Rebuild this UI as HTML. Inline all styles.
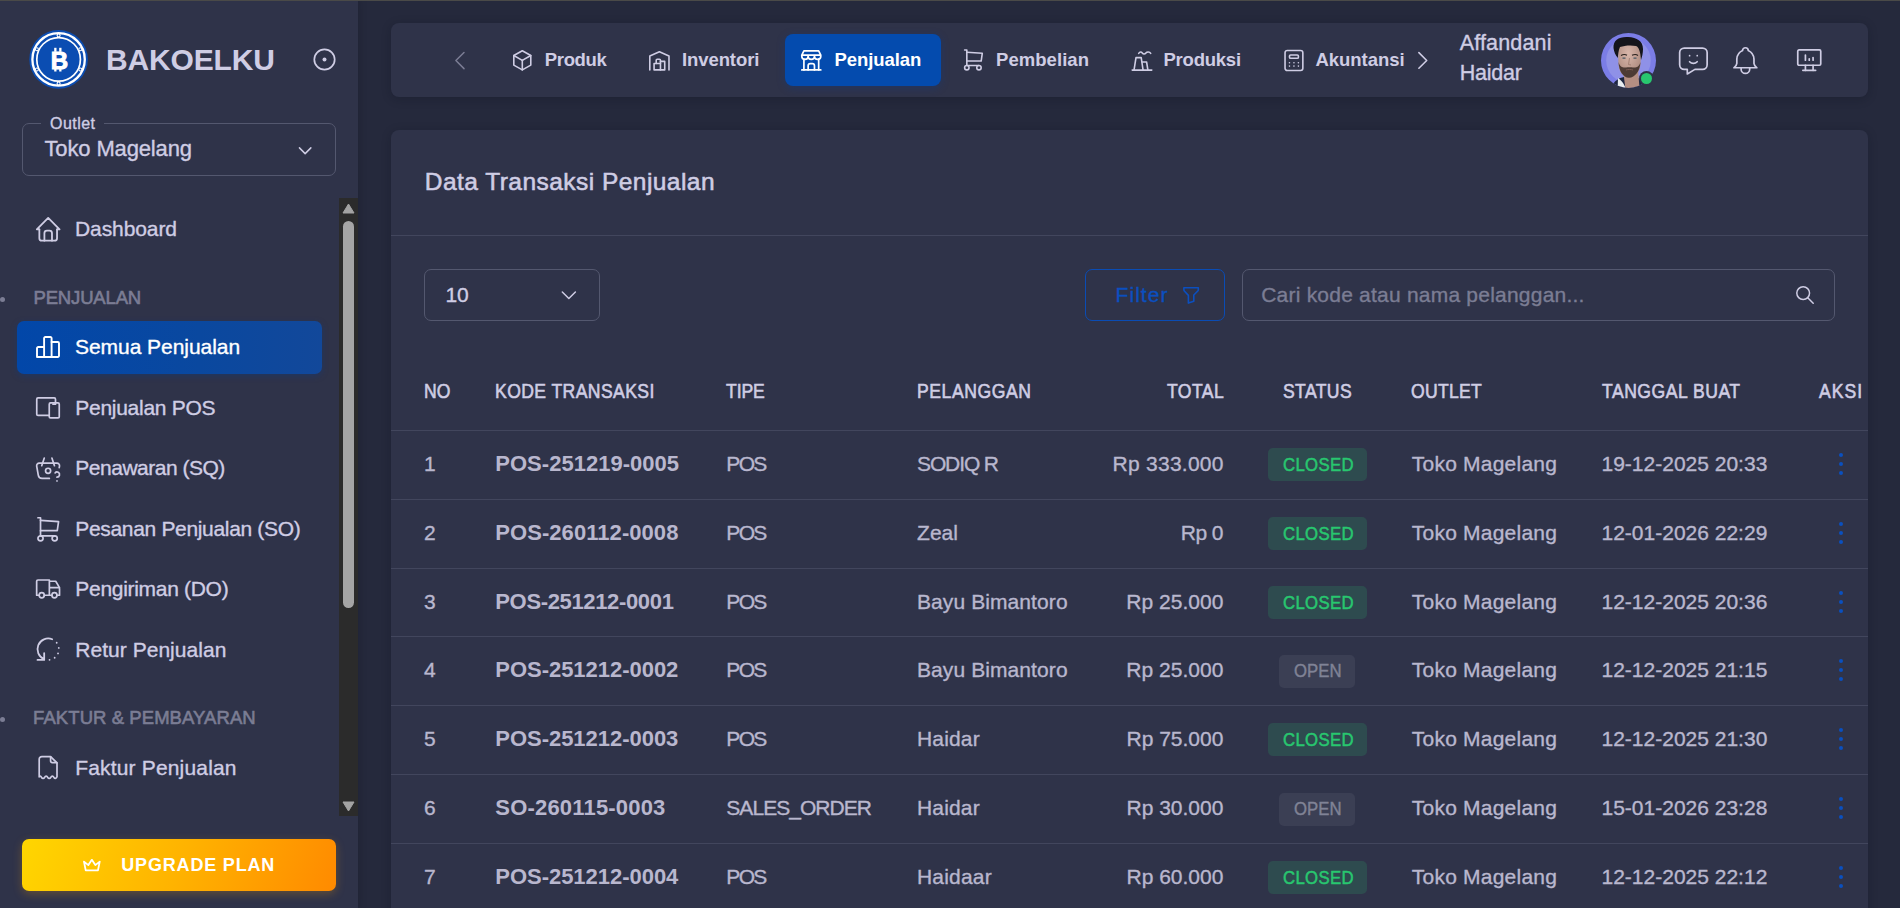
<!DOCTYPE html><html><head><meta charset="utf-8"><style>
html,body{margin:0;padding:0;}
body{width:1900px;height:908px;overflow:hidden;position:relative;background:#25293c;font-family:"Liberation Sans",sans-serif;}
.t{position:absolute;white-space:nowrap;font-family:"Liberation Sans",sans-serif;}
</style></head><body>
<div style="position:absolute;left:0px;top:0px;width:358px;height:908px;background:#2f3349;box-shadow:0 0 8px rgba(10,12,25,0.25);"></div>
<svg style="position:absolute;left:0;top:0" width="120" height="120" viewBox="0 0 120 120">
<circle cx="58.6" cy="59.4" r="29.3" fill="#0b4db2"/>
<circle cx="58.6" cy="59.4" r="26.2" fill="none" stroke="#fff" stroke-width="2.3"/>
<circle cx="58.6" cy="59.4" r="21.8" fill="none" stroke="#fff" stroke-width="1.7"/>
<g fill="#0b4db2" stroke="#fff" stroke-width="1.1">
<circle cx="58.6" cy="35.4" r="1.5"/><circle cx="58.6" cy="83.4" r="1.5"/>
<circle cx="80.3" cy="49.3" r="1.5"/><circle cx="80.3" cy="69.5" r="1.5"/>
<circle cx="36.9" cy="49.3" r="1.5"/><circle cx="36.9" cy="69.5" r="1.5"/>
</g>
<text x="59.4" y="68.6" text-anchor="middle" font-family="Liberation Sans" font-weight="bold" font-size="24" fill="#fff" stroke="#fff" stroke-width="1">B</text>
<rect x="54.2" y="47.8" width="2.3" height="4" fill="#fff"/><rect x="59.2" y="47.8" width="2.3" height="4" fill="#fff"/>
<rect x="54.2" y="67.5" width="2.3" height="4" fill="#fff"/><rect x="59.2" y="67.5" width="2.3" height="4" fill="#fff"/>
</svg>
<div class="t" style="left:106.0px;top:45.0px;font-size:30px;line-height:30px;color:#cfcde4;font-weight:bold;letter-spacing:-0.15px;">BAKOELKU</div>
<svg style="position:absolute;left:312px;top:47px" width="25" height="25" viewBox="0 0 25 25">
<circle cx="12.5" cy="12.5" r="10.2" fill="none" stroke="#cfcde4" stroke-width="1.7"/>
<circle cx="12.5" cy="12.5" r="2" fill="#cfcde4"/></svg>
<div style="position:absolute;left:22px;top:123px;width:312px;height:51px;border:1px solid #54586f;border-radius:7px;"></div>
<div style="position:absolute;left:41px;top:115px;width:63px;height:14px;background:#2f3349;"></div>
<div class="t" style="left:50.0px;top:115.7px;font-size:16px;line-height:16px;color:#cfcde4;letter-spacing:0.45px;-webkit-text-stroke:0.35px #cfcde4;">Outlet</div>
<div class="t" style="left:44.5px;top:138.3px;font-size:22px;line-height:22px;color:#cfcde4;letter-spacing:-0.14px;-webkit-text-stroke:0.35px #cfcde4;">Toko Magelang</div>
<svg style="position:absolute;left:298.70px;top:146.70px;overflow:visible;" width="12.30" height="7.50" viewBox="5.526 8.053 12.947 7.895" fill="none" stroke="#cfcde4" stroke-width="1.579" stroke-linecap="round" stroke-linejoin="round"><path d="M6 9l6 6l6 -6"/></svg>
<svg style="position:absolute;left:35.70px;top:216.50px;overflow:visible;" width="24.40" height="24.70" viewBox="2.347 2.229 19.305 19.543" fill="none" stroke="#cfcde4" stroke-width="1.424" stroke-linecap="round" stroke-linejoin="round"><path d="M5 12l-2 0l9 -9l9 9l-2 0"/><path d="M5 12v7a2 2 0 0 0 2 2h10a2 2 0 0 0 2 -2v-7"/><path d="M9 21v-6a2 2 0 0 1 2 -2h2a2 2 0 0 1 2 2v6"/></svg>
<div class="t" style="left:75.0px;top:218.2px;font-size:21px;line-height:21px;color:#cfcde4;letter-spacing:-0.09px;-webkit-text-stroke:0.35px #cfcde4;">Dashboard</div>
<div style="position:absolute;left:0px;top:296.5px;width:5px;height:5px;border-radius:50%;background:#7b7d94"></div>
<div class="t" style="left:33.5px;top:288.5px;font-size:18.5px;line-height:18.5px;color:#7b7d94;letter-spacing:-0.16px;-webkit-text-stroke:0.6px #7b7d94;">PENJUALAN</div>
<div style="position:absolute;left:17px;top:321px;width:305px;height:53px;border-radius:7px;background:linear-gradient(90deg,#0247a9 0%,#0a489f 60%,#12489a 100%);box-shadow:0 2px 6px rgba(4,60,150,0.35);"></div>
<svg style="position:absolute;left:0;top:0;overflow:visible" width="1900" height="908" viewBox="0 0 1900 908" fill="none" stroke="#ffffff" stroke-width="1.9" stroke-linecap="round" stroke-linejoin="round" ><path d="M37 357 V348.2 a1.2 1.2 0 0 1 1.2 -1.2 H44.1 V338.2 a1.2 1.2 0 0 1 1.2 -1.2 H50.4 a1.2 1.2 0 0 1 1.2 1.2 V342 H57.8 a1.2 1.2 0 0 1 1.2 1.2 V355.8 a1.2 1.2 0 0 1 -1.2 1.2 H38.2 a1.2 1.2 0 0 1 -1.2 -1.2 z"/><path d="M44.1 347 V357"/><path d="M51.6 342 V357"/></svg>
<div class="t" style="left:75.0px;top:336.4px;font-size:21px;line-height:21px;color:#ffffff;letter-spacing:-0.05px;-webkit-text-stroke:0.35px #ffffff;">Semua Penjualan</div>
<div class="t" style="left:75.3px;top:397.1px;font-size:21px;line-height:21px;color:#cfcde4;letter-spacing:-0.28px;-webkit-text-stroke:0.35px #cfcde4;">Penjualan POS</div>
<svg style="position:absolute;left:36.00px;top:396.90px;overflow:visible;" width="24.00" height="21.90" viewBox="2.405 3.245 19.189 17.510" fill="none" stroke="#cfcde4" stroke-width="1.359" stroke-linecap="round" stroke-linejoin="round"><path d="M13 9a1 1 0 0 1 1 -1h6a1 1 0 0 1 1 1v10a1 1 0 0 1 -1 1h-6a1 1 0 0 1 -1 -1v-10z"/><path d="M18 8v-3a1 1 0 0 0 -1 -1h-13a1 1 0 0 0 -1 1v12a1 1 0 0 0 1 1h9"/><path d="M16 9h2"/></svg>
<div class="t" style="left:75.3px;top:457.3px;font-size:21px;line-height:21px;color:#cfcde4;letter-spacing:-0.49px;-webkit-text-stroke:0.35px #cfcde4;">Penawaran (SQ)</div>
<svg style="position:absolute;left:36.00px;top:456.70px;overflow:visible;" width="24.20" height="25.00" viewBox="2.489 3.175 19.022 19.651" fill="none" stroke="#cfcde4" stroke-width="1.336" stroke-linecap="round" stroke-linejoin="round"><path d="M17 10l-2 -6"/><path d="M7 10l2 -6"/><path d="M13 20h-5.756a3 3 0 0 1 -2.965 -2.544l-1.255 -7.152a2 2 0 0 1 1.977 -2.304h13.999a2 2 0 0 1 1.977 2.304l-.215 1.227"/><path d="M10 14a2 2 0 1 0 4 0a2 2 0 0 0 -4 0"/><path d="M19 22v.01"/><path d="M19 19a2.003 2.003 0 0 0 .914 -3.782a1.98 1.98 0 0 0 -2.414 .483"/></svg>
<div class="t" style="left:75.3px;top:517.8px;font-size:21px;line-height:21px;color:#cfcde4;letter-spacing:-0.33px;-webkit-text-stroke:0.35px #cfcde4;">Pesanan Penjualan (SO)</div>
<svg style="position:absolute;left:36.70px;top:516.50px;overflow:visible;" width="22.50" height="24.70" viewBox="3.272 2.418 17.457 19.164" fill="none" stroke="#cfcde4" stroke-width="1.319" stroke-linecap="round" stroke-linejoin="round"><path d="M6 19m-2 0a2 2 0 1 0 4 0a2 2 0 1 0 -4 0"/><path d="M17 19m-2 0a2 2 0 1 0 4 0a2 2 0 1 0 -4 0"/><path d="M17 17h-11v-14h-2"/><path d="M6 5l14 1l-1 7h-13"/></svg>
<div class="t" style="left:75.3px;top:577.8px;font-size:21px;line-height:21px;color:#cfcde4;letter-spacing:-0.30px;-webkit-text-stroke:0.35px #cfcde4;">Pengiriman (DO)</div>
<svg style="position:absolute;left:36.00px;top:579.00px;overflow:visible;" width="24.20" height="19.80" viewBox="2.483 4.213 19.034 15.573" fill="none" stroke="#cfcde4" stroke-width="1.337" stroke-linecap="round" stroke-linejoin="round"><path d="M7 17m-2 0a2 2 0 1 0 4 0a2 2 0 1 0 -4 0"/><path d="M17 17m-2 0a2 2 0 1 0 4 0a2 2 0 1 0 -4 0"/><path d="M5 17h-2v-11a1 1 0 0 1 1 -1h9v12m-4 0h6m4 0h2v-6h-8m0 -5h5l3 5"/></svg>
<div class="t" style="left:75.3px;top:638.6px;font-size:21px;line-height:21px;color:#cfcde4;letter-spacing:0.03px;-webkit-text-stroke:0.35px #cfcde4;">Retur Penjualan</div>
<svg style="position:absolute;left:36.90px;top:638.00px;overflow:visible;" width="22.30" height="23.20" viewBox="3.622 3.590 16.697 17.371" fill="none" stroke="#cfcde4" stroke-width="1.348" stroke-linecap="round" stroke-linejoin="round"><path d="M15 4.55a8 8 0 0 0 -6 14.9m0 -4.45v5h-5"/><path d="M18.37 7.16l0 .01"/><path d="M13 19.94l0 .01"/><path d="M16.84 18.37l0 .01"/><path d="M19.37 15.1l0 .01"/><path d="M19.94 11l0 .01"/></svg>
<div style="position:absolute;left:0px;top:716.5px;width:5px;height:5px;border-radius:50%;background:#7b7d94"></div>
<div class="t" style="left:33.1px;top:708.6px;font-size:18.5px;line-height:18.5px;color:#7b7d94;letter-spacing:0.07px;-webkit-text-stroke:0.6px #7b7d94;">FAKTUR &amp; PEMBAYARAN</div>
<div class="t" style="left:75.2px;top:757.4px;font-size:21px;line-height:21px;color:#cfcde4;letter-spacing:0.17px;-webkit-text-stroke:0.35px #cfcde4;">Faktur Penjualan</div>
<svg style="position:absolute;left:0;top:0;overflow:visible" width="1900" height="908" viewBox="0 0 1900 908" fill="none" stroke="#cfcde4" stroke-width="1.7" stroke-linecap="round" stroke-linejoin="round" ><path d="M39.2 776.8 V759.2 a2.6 2.6 0 0 1 2.6 -2.6 H50.6 L57 762.9 V776.8 c-0.8 2 -2.3 2 -3.1 0.5 c-0.8 -1.5 -2.3 -1.5 -3.1 0 c-0.8 1.5 -2.3 1.5 -3.1 0 c-0.8 -1.5 -2.3 -1.5 -3.1 0 c-0.8 1.5 -2.3 1.5 -3.1 0 c-0.8 -1.5 -2 -1.3 -2.3 -0.5"/><path d="M50.6 756.8 V761.1 a1.6 1.6 0 0 0 1.6 1.6 H56.8"/></svg>
<div style="position:absolute;left:339px;top:198px;width:19px;height:618px;background:#2b2b2b;"></div>
<svg style="position:absolute;left:342px;top:203px" width="13" height="11" viewBox="0 0 13 11"><path d="M6.5 1L12 10H1z" fill="#a3a3a3" stroke="#a3a3a3" stroke-linejoin="round" stroke-width="1"/></svg>
<svg style="position:absolute;left:342px;top:801px" width="13" height="11" viewBox="0 0 13 11"><path d="M6.5 10L12 1H1z" fill="#a3a3a3" stroke="#a3a3a3" stroke-linejoin="round" stroke-width="1"/></svg>
<div style="position:absolute;left:343px;top:220.7px;width:11px;height:387px;background:#a5a5a5;border-radius:6px;"></div>
<div style="position:absolute;left:22px;top:839px;width:314px;height:52px;border-radius:7px;background:linear-gradient(110deg,#ffd600 0%,#ffb300 50%,#ff8a00 100%);box-shadow:0 3px 10px rgba(255,160,0,0.25);"></div>
<svg style="position:absolute;left:83.10px;top:858.90px;overflow:visible;" width="17.70" height="12.20" viewBox="1.886 5.029 20.229 13.943" fill="none" stroke="#ffffff" stroke-width="2.057" stroke-linecap="round" stroke-linejoin="round"><path d="M12 6l4 6l5 -4l-2 10h-14l-2 -10l5 4z"/></svg>
<div class="t" style="left:121.3px;top:856.0px;font-size:18px;line-height:18px;color:#ffffff;font-weight:bold;letter-spacing:0.82px;">UPGRADE PLAN</div>
<div style="position:absolute;left:391px;top:23px;width:1477px;height:74px;background:#2f3349;border-radius:8px;box-shadow:0 2px 10px rgba(12,14,28,0.25);"></div>
<svg style="position:absolute;left:454.50px;top:51.90px;overflow:visible;" width="9.90" height="17.10" viewBox="8.333 5.667 7.333 12.667" fill="none" stroke="#7b7d94" stroke-width="1.111" stroke-linecap="round" stroke-linejoin="round"><path d="M15 6l-6 6l6 6"/></svg>
<svg style="position:absolute;left:512.60px;top:50.10px;overflow:visible;" width="18.60" height="20.70" viewBox="3.241 2.252 17.517 19.495" fill="none" stroke="#cfcde4" stroke-width="1.507" stroke-linecap="round" stroke-linejoin="round"><path d="M12 3l8 4.5l0 9l-8 4.5l-8 -4.5l0 -9l8 -4.5"/><path d="M12 12l8 -4.5"/><path d="M12 12l0 9"/><path d="M12 12l-8 -4.5"/></svg>
<div class="t" style="left:544.8px;top:50.5px;font-size:18.5px;line-height:18.5px;color:#cfcde4;font-weight:bold;letter-spacing:-0.34px;">Produk</div>
<svg style="position:absolute;left:649.10px;top:51.10px;overflow:visible;" width="20.80" height="19.70" viewBox="2.241 3.257 19.518 18.486" fill="none" stroke="#cfcde4" stroke-width="1.501" stroke-linecap="round" stroke-linejoin="round"><path d="M3 21v-13l9 -4l9 4v13"/><path d="M13 13h4v8h-10v-6h6"/><path d="M13 21v-9a1 1 0 0 0 -1 -1h-2a1 1 0 0 0 -1 1v3"/></svg>
<div class="t" style="left:682.0px;top:50.8px;font-size:18.5px;line-height:18.5px;color:#cfcde4;font-weight:bold;letter-spacing:-0.09px;">Inventori</div>
<div style="position:absolute;left:785px;top:34px;width:156px;height:52px;background:#044bae;border-radius:8px;box-shadow:0 2px 8px rgba(4,60,160,0.3);"></div>
<svg style="position:absolute;left:801.30px;top:50.00px;overflow:visible;" width="20.60" height="20.80" viewBox="2.242 2.147 19.516 19.705" fill="none" stroke="#ffffff" stroke-width="1.611" stroke-linecap="round" stroke-linejoin="round"><path d="M3 21l18 0"/><path d="M3 7v1a3 3 0 0 0 6 0v-1m0 1a3 3 0 0 0 6 0v-1m0 1a3 3 0 0 0 6 0v-1h-18l2 -4h14l2 4"/><path d="M5 21l0 -10.15"/><path d="M19 21l0 -10.15"/><path d="M9 21v-4a2 2 0 0 1 2 -2h2a2 2 0 0 1 2 2v4"/></svg>
<div class="t" style="left:834.6px;top:51.0px;font-size:18.5px;line-height:18.5px;color:#ffffff;font-weight:bold;letter-spacing:-0.08px;">Penjualan</div>
<svg style="position:absolute;left:964.10px;top:49.30px;overflow:visible;" width="18.90" height="21.90" viewBox="3.444 2.086 17.112 19.828" fill="none" stroke="#cfcde4" stroke-width="1.449" stroke-linecap="round" stroke-linejoin="round"><path d="M6 19m-2 0a2 2 0 1 0 4 0a2 2 0 1 0 -4 0"/><path d="M17 19m-2 0a2 2 0 1 0 4 0a2 2 0 1 0 -4 0"/><path d="M17 17h-11v-14h-2"/><path d="M6 5l14 1l-1 7h-13"/></svg>
<div class="t" style="left:996.0px;top:50.8px;font-size:18.5px;line-height:18.5px;color:#cfcde4;font-weight:bold;letter-spacing:0.06px;">Pembelian</div>
<svg style="position:absolute;left:0;top:0;overflow:visible" width="1900" height="908" viewBox="0 0 1900 908" fill="none" stroke="#cfcde4" stroke-width="1.6" stroke-linecap="round" stroke-linejoin="round" ><path d="M1132.2 70.1 H1151.8"/><path d="M1134 70.1 L1136 57.6 H1141.2 L1143.1 70.1"/><path d="M1142.3 62 H1146.6 L1147.9 70.1"/><path d="M1138.7 53.4 C1139.9 51.7 1141.3 51.7 1142.3 53 C1143.3 54.3 1144.9 54.3 1145.9 53 C1147 51.7 1149.6 51.7 1150.7 53.4"/></svg>
<div class="t" style="left:1163.5px;top:50.8px;font-size:18.5px;line-height:18.5px;color:#cfcde4;font-weight:bold;letter-spacing:-0.23px;">Produksi</div>
<svg style="position:absolute;left:1283.50px;top:50.10px;overflow:visible;" width="19.90" height="21.10" viewBox="3.065 2.526 17.871 18.949" fill="none" stroke="#cfcde4" stroke-width="1.437" stroke-linecap="round" stroke-linejoin="round"><path d="M4 3m0 2a2 2 0 0 1 2 -2h12a2 2 0 0 1 2 2v14a2 2 0 0 1 -2 2h-12a2 2 0 0 1 -2 -2z"/><path d="M8 7m0 1a1 1 0 0 1 1 -1h6a1 1 0 0 1 1 1v1a1 1 0 0 1 -1 1h-6a1 1 0 0 1 -1 -1z"/><path d="M8 14l0 .01"/><path d="M12 14l0 .01"/><path d="M16 14l0 .01"/><path d="M8 17l0 .01"/><path d="M12 17l0 .01"/><path d="M16 17l0 .01"/></svg>
<div class="t" style="left:1315.5px;top:50.8px;font-size:18.5px;line-height:18.5px;color:#cfcde4;font-weight:bold;letter-spacing:-0.05px;">Akuntansi</div>
<svg style="position:absolute;left:1417.70px;top:52.30px;overflow:visible;" width="9.60" height="16.90" viewBox="8.319 5.521 7.361 12.958" fill="none" stroke="#cfcde4" stroke-width="1.227" stroke-linecap="round" stroke-linejoin="round"><path d="M9 6l6 6l-6 6"/></svg>
<div class="t" style="left:1459.7px;top:32.9px;font-size:21.5px;line-height:21.5px;color:#cfcde4;letter-spacing:0.17px;-webkit-text-stroke:0.35px #cfcde4;">Affandani</div>
<div class="t" style="left:1459.7px;top:63.4px;font-size:21.5px;line-height:21.5px;color:#cfcde4;letter-spacing:-0.21px;-webkit-text-stroke:0.35px #cfcde4;">Haidar</div>
<svg style="position:absolute;left:0;top:0" width="1700" height="100" viewBox="0 0 1700 100">
<defs><clipPath id="av"><circle cx="1628.5" cy="60.4" r="27.5"/></clipPath>
<radialGradient id="skin" cx="0.45" cy="0.35" r="0.7"><stop offset="0" stop-color="#d8b6aa"/><stop offset="1" stop-color="#a9867a"/></radialGradient></defs>
<circle cx="1628.5" cy="60.4" r="27.5" fill="#7b7de6"/>
<g clip-path="url(#av)">
<circle cx="1628.5" cy="60.4" r="22.3" fill="#8f91e7"/>
<path d="M1610 92 C1612 82 1618 78 1624 77 L1634 77 C1640 78 1646 82 1648 92z" fill="#1c2540"/>
<path d="M1617.5 93 L1618 78 C1621 80 1625 84 1627 93z" fill="#e8ecf0"/>
<path d="M1623 70 L1638 70 L1640 93 L1626 93z" fill="#b48e82"/>
<path d="M1618 52 C1618 43 1623 40 1629.5 40 C1636 40 1641 43 1641 52 L1640.5 64 C1640 72 1635 77 1629 77.5 C1623 77 1619 72 1618.5 64z" fill="url(#skin)"/>
<path d="M1618.5 62 C1619 71 1623 77.5 1629 77.8 C1635 77.5 1640 71 1640.5 62 C1639 67 1636 68 1633 67.5 C1631 67 1628 67 1626 67.5 C1623 68 1620 67 1618.5 62z" fill="#3b2c27" opacity="0.85"/>
<path d="M1621 55.5 C1623 54.3 1625.5 54.3 1627 55.3 M1632 55.3 C1634 54.3 1636.5 54.3 1638 55.5" stroke="#2a211e" stroke-width="1.1" fill="none"/>
<path d="M1622.5 58.2 h3 M1633.5 58.2 h3" stroke="#4a5a66" stroke-width="1.2"/>
<path d="M1629.5 58 L1628.5 64.5 L1631 65" stroke="#9a776b" stroke-width="0.8" fill="none"/>
<path d="M1626 70 C1628 69.3 1631 69.3 1633 70" stroke="#7a5a52" stroke-width="1" fill="none"/>
<path d="M1613.5 48 C1613 40 1619 36.5 1628 37 C1637 37.5 1643 41 1643 49 C1643 53 1642 57 1641 60 C1640.5 52 1639 47 1636 46 C1631 45 1624 45.5 1620 47 C1618.5 50 1618 55 1617.8 58 C1615.5 55 1614 52 1613.5 48z" fill="#15151b"/>
</g></svg>
<div style="position:absolute;left:1638.9px;top:70.6px;width:15px;height:15px;border-radius:50%;background:#2f3349"></div>
<div style="position:absolute;left:1640.9px;top:72.6px;width:11px;height:11px;border-radius:50%;background:#28c76f"></div>
<svg style="position:absolute;left:1679.10px;top:46.80px;overflow:visible;" width="28.80" height="28.00" viewBox="2.565 3.328 18.869 18.345" fill="none" stroke="#cfcde4" stroke-width="1.114" stroke-linecap="round" stroke-linejoin="round"><path d="M18 4a3 3 0 0 1 3 3v8a3 3 0 0 1 -3 3h-5l-5 3v-3h-2a3 3 0 0 1 -3 -3v-8a3 3 0 0 1 3 -3h12z"/><path d="M9.5 9h.01"/><path d="M14.5 9h.01"/><path d="M9.5 13a3.5 3.5 0 0 0 5 0"/></svg>
<svg style="position:absolute;left:1733.00px;top:46.80px;overflow:visible;" width="24.80" height="27.20" viewBox="3.330 2.491 17.340 19.018" fill="none" stroke="#cfcde4" stroke-width="1.189" stroke-linecap="round" stroke-linejoin="round"><path d="M10 5a2 2 0 1 1 4 0a7 7 0 0 1 4 6v3a4 4 0 0 0 2 3h-16a4 4 0 0 0 2 -3v-3a7 7 0 0 1 4 -6"/><path d="M9 17v1a3 3 0 0 0 6 0v-1"/></svg>
<svg style="position:absolute;left:1796.50px;top:48.80px;overflow:visible;" width="24.50" height="22.30" viewBox="2.408 3.269 19.184 17.462" fill="none" stroke="#cfcde4" stroke-width="1.331" stroke-linecap="round" stroke-linejoin="round"><path d="M3 4m0 1a1 1 0 0 1 1 -1h16a1 1 0 0 1 1 1v10a1 1 0 0 1 -1 1h-16a1 1 0 0 1 -1 -1z"/><path d="M7 20h10"/><path d="M9 16v4"/><path d="M15 16v4"/><path d="M9 12v-4"/><path d="M12 12v-1"/><path d="M15 12v-2"/></svg>
<div style="position:absolute;left:391px;top:130px;width:1477px;height:800px;background:#2f3349;border-radius:8px;box-shadow:0 2px 10px rgba(12,14,28,0.25);"></div>
<div class="t" style="left:424.8px;top:170.4px;font-size:24.5px;line-height:24.5px;color:#cfcde4;letter-spacing:0.46px;-webkit-text-stroke:0.55px #cfcde4;">Data Transaksi Penjualan</div>
<div style="position:absolute;left:391px;top:235px;width:1477px;height:1px;background:#42465d;"></div>
<div style="position:absolute;left:424px;top:269px;width:176px;height:52px;box-sizing:border-box;border:1px solid #54586f;border-radius:7px;"></div>
<div class="t" style="left:445.4px;top:284.2px;font-size:21px;line-height:21px;color:#cfcde4;-webkit-text-stroke:0.35px #cfcde4;">10</div>
<svg style="position:absolute;left:562.00px;top:290.70px;overflow:visible;" width="13.70" height="8.50" viewBox="5.725 8.107 12.550 7.786" fill="none" stroke="#cfcde4" stroke-width="1.374" stroke-linecap="round" stroke-linejoin="round"><path d="M6 9l6 6l6 -6"/></svg>
<div style="position:absolute;left:1085px;top:269px;width:140px;height:52px;box-sizing:border-box;border:1.5px solid #0a4cb4;border-radius:7px;"></div>
<div class="t" style="left:1115.6px;top:284.1px;font-size:21px;line-height:21px;color:#0b4fbf;letter-spacing:1.03px;-webkit-text-stroke:0.35px #0b4fbf;">Filter</div>
<svg style="position:absolute;left:1182.80px;top:287.00px;overflow:visible;" width="16.20" height="16.80" viewBox="3.033 3.201 17.934 18.598" fill="none" stroke="#0b4fbf" stroke-width="1.771" stroke-linecap="round" stroke-linejoin="round"><path d="M4 4h16v2.172a2 2 0 0 1 -.586 1.414l-4.414 4.414v7l-6 2v-8.5l-4.48 -4.928a2 2 0 0 1 -.52 -1.345v-2.227z"/></svg>
<div style="position:absolute;left:1242px;top:269px;width:593px;height:52px;box-sizing:border-box;border:1px solid #54586f;border-radius:7px;"></div>
<div class="t" style="left:1261.2px;top:284.3px;font-size:21px;line-height:21px;color:#7b7d94;letter-spacing:0.22px;-webkit-text-stroke:0.35px #7b7d94;">Cari kode atau nama pelanggan...</div>
<svg style="position:absolute;left:1796.00px;top:286.00px;overflow:visible;" width="18.00" height="17.90" viewBox="2.152 2.207 19.696 19.587" fill="none" stroke="#cfcde4" stroke-width="1.641" stroke-linecap="round" stroke-linejoin="round"><path d="M10 10m-7 0a7 7 0 1 0 14 0a7 7 0 1 0 -14 0"/><path d="M21 21l-6 -6"/></svg>
<div class="t" style="left:424.0px;top:382.1px;font-size:19.5px;line-height:19.5px;color:#cfcde4;letter-spacing:0.19px;-webkit-text-stroke:0.6px #cfcde4;transform:scaleX(0.9);transform-origin:0 0;">NO</div>
<div class="t" style="left:495.0px;top:382.1px;font-size:19.5px;line-height:19.5px;color:#cfcde4;letter-spacing:0.47px;-webkit-text-stroke:0.6px #cfcde4;transform:scaleX(0.9);transform-origin:0 0;">KODE TRANSAKSI</div>
<div class="t" style="left:726.0px;top:382.1px;font-size:19.5px;line-height:19.5px;color:#cfcde4;letter-spacing:-0.07px;-webkit-text-stroke:0.6px #cfcde4;transform:scaleX(0.9);transform-origin:0 0;">TIPE</div>
<div class="t" style="left:917.0px;top:382.1px;font-size:19.5px;line-height:19.5px;color:#cfcde4;letter-spacing:0.64px;-webkit-text-stroke:0.6px #cfcde4;transform:scaleX(0.9);transform-origin:0 0;">PELANGGAN</div>
<div class="t" style="left:1166.5px;top:382.1px;font-size:19.5px;line-height:19.5px;color:#cfcde4;letter-spacing:0.50px;-webkit-text-stroke:0.6px #cfcde4;transform:scaleX(0.9);transform-origin:0 0;">TOTAL</div>
<div class="t" style="left:1283.0px;top:382.1px;font-size:19.5px;line-height:19.5px;color:#cfcde4;letter-spacing:0.45px;-webkit-text-stroke:0.6px #cfcde4;transform:scaleX(0.9);transform-origin:0 0;">STATUS</div>
<div class="t" style="left:1411.2px;top:382.1px;font-size:19.5px;line-height:19.5px;color:#cfcde4;letter-spacing:0.31px;-webkit-text-stroke:0.6px #cfcde4;transform:scaleX(0.9);transform-origin:0 0;">OUTLET</div>
<div class="t" style="left:1601.6px;top:382.1px;font-size:19.5px;line-height:19.5px;color:#cfcde4;letter-spacing:0.58px;-webkit-text-stroke:0.6px #cfcde4;transform:scaleX(0.9);transform-origin:0 0;">TANGGAL BUAT</div>
<div class="t" style="left:1819.2px;top:382.1px;font-size:19.5px;line-height:19.5px;color:#cfcde4;letter-spacing:1.16px;-webkit-text-stroke:0.6px #cfcde4;transform:scaleX(0.9);transform-origin:0 0;">AKSI</div>
<div style="position:absolute;left:391px;top:430px;width:1477px;height:1px;background:#42465d;"></div>
<div class="t" style="left:424.0px;top:453.1px;font-size:21px;line-height:21px;color:#b9b7ce;-webkit-text-stroke:0.35px #b9b7ce;">1</div>
<div class="t" style="left:495.3px;top:452.9px;font-size:22px;line-height:22px;color:#b9b7ce;font-weight:bold;letter-spacing:0.02px;">POS-251219-0005</div>
<div class="t" style="left:726.3px;top:453.1px;font-size:21px;line-height:21px;color:#b9b7ce;letter-spacing:-1.66px;-webkit-text-stroke:0.35px #b9b7ce;">POS</div>
<div class="t" style="left:917.0px;top:453.1px;font-size:21px;line-height:21px;color:#b9b7ce;letter-spacing:-1.11px;-webkit-text-stroke:0.35px #b9b7ce;">SODIQ R</div>
<div class="t" style="left:1112.6px;top:453.1px;font-size:21px;line-height:21px;color:#b9b7ce;letter-spacing:0.25px;-webkit-text-stroke:0.35px #b9b7ce;">Rp 333.000</div>
<div style="position:absolute;left:1268px;top:448px;width:99px;height:33px;background:#2e4b4f;border-radius:5px;"></div>
<div class="t" style="left:1282.5px;top:455.7px;font-size:18px;line-height:18px;color:#28c76f;letter-spacing:0.36px;-webkit-text-stroke:0.5px #28c76f;transform:scaleX(0.93);transform-origin:0 0;">CLOSED</div>
<div class="t" style="left:1411.8px;top:453.1px;font-size:21px;line-height:21px;color:#b9b7ce;letter-spacing:0.22px;-webkit-text-stroke:0.35px #b9b7ce;">Toko Magelang</div>
<div class="t" style="left:1601.5px;top:453.1px;font-size:21px;line-height:21px;color:#b9b7ce;-webkit-text-stroke:0.35px #b9b7ce;">19-12-2025 20:33</div>
<div style="position:absolute;left:1839px;top:453.4px;width:4px;height:4px;border-radius:50%;background:#0a50bf"></div>
<div style="position:absolute;left:1839px;top:462.2px;width:4px;height:4px;border-radius:50%;background:#0a50bf"></div>
<div style="position:absolute;left:1839px;top:470.9px;width:4px;height:4px;border-radius:50%;background:#0a50bf"></div>
<div class="t" style="left:424.0px;top:522.1px;font-size:21px;line-height:21px;color:#b9b7ce;-webkit-text-stroke:0.35px #b9b7ce;">2</div>
<div class="t" style="left:495.3px;top:521.9px;font-size:22px;line-height:22px;color:#b9b7ce;font-weight:bold;letter-spacing:0.06px;">POS-260112-0008</div>
<div class="t" style="left:726.3px;top:522.1px;font-size:21px;line-height:21px;color:#b9b7ce;letter-spacing:-1.66px;-webkit-text-stroke:0.35px #b9b7ce;">POS</div>
<div class="t" style="left:917.0px;top:522.1px;font-size:21px;line-height:21px;color:#b9b7ce;letter-spacing:0.05px;-webkit-text-stroke:0.35px #b9b7ce;">Zeal</div>
<div class="t" style="left:1180.8px;top:522.1px;font-size:21px;line-height:21px;color:#b9b7ce;letter-spacing:-0.58px;-webkit-text-stroke:0.35px #b9b7ce;">Rp 0</div>
<div style="position:absolute;left:1268px;top:517px;width:99px;height:33px;background:#2e4b4f;border-radius:5px;"></div>
<div class="t" style="left:1282.5px;top:524.7px;font-size:18px;line-height:18px;color:#28c76f;letter-spacing:0.36px;-webkit-text-stroke:0.5px #28c76f;transform:scaleX(0.93);transform-origin:0 0;">CLOSED</div>
<div class="t" style="left:1411.8px;top:522.1px;font-size:21px;line-height:21px;color:#b9b7ce;letter-spacing:0.22px;-webkit-text-stroke:0.35px #b9b7ce;">Toko Magelang</div>
<div class="t" style="left:1601.5px;top:522.1px;font-size:21px;line-height:21px;color:#b9b7ce;-webkit-text-stroke:0.35px #b9b7ce;">12-01-2026 22:29</div>
<div style="position:absolute;left:1839px;top:522.4px;width:4px;height:4px;border-radius:50%;background:#0a50bf"></div>
<div style="position:absolute;left:1839px;top:531.2px;width:4px;height:4px;border-radius:50%;background:#0a50bf"></div>
<div style="position:absolute;left:1839px;top:539.9px;width:4px;height:4px;border-radius:50%;background:#0a50bf"></div>
<div style="position:absolute;left:391px;top:499px;width:1477px;height:1px;background:#42465d;"></div>
<div class="t" style="left:424.0px;top:591.1px;font-size:21px;line-height:21px;color:#b9b7ce;-webkit-text-stroke:0.35px #b9b7ce;">3</div>
<div class="t" style="left:495.3px;top:590.9px;font-size:22px;line-height:22px;color:#b9b7ce;font-weight:bold;letter-spacing:-0.35px;">POS-251212-0001</div>
<div class="t" style="left:726.3px;top:591.1px;font-size:21px;line-height:21px;color:#b9b7ce;letter-spacing:-1.66px;-webkit-text-stroke:0.35px #b9b7ce;">POS</div>
<div class="t" style="left:917.0px;top:591.1px;font-size:21px;line-height:21px;color:#b9b7ce;letter-spacing:0.09px;-webkit-text-stroke:0.35px #b9b7ce;">Bayu Bimantoro</div>
<div class="t" style="left:1126.2px;top:591.1px;font-size:21px;line-height:21px;color:#b9b7ce;letter-spacing:0.04px;-webkit-text-stroke:0.35px #b9b7ce;">Rp 25.000</div>
<div style="position:absolute;left:1268px;top:586px;width:99px;height:33px;background:#2e4b4f;border-radius:5px;"></div>
<div class="t" style="left:1282.5px;top:593.7px;font-size:18px;line-height:18px;color:#28c76f;letter-spacing:0.36px;-webkit-text-stroke:0.5px #28c76f;transform:scaleX(0.93);transform-origin:0 0;">CLOSED</div>
<div class="t" style="left:1411.8px;top:591.1px;font-size:21px;line-height:21px;color:#b9b7ce;letter-spacing:0.22px;-webkit-text-stroke:0.35px #b9b7ce;">Toko Magelang</div>
<div class="t" style="left:1601.5px;top:591.1px;font-size:21px;line-height:21px;color:#b9b7ce;-webkit-text-stroke:0.35px #b9b7ce;">12-12-2025 20:36</div>
<div style="position:absolute;left:1839px;top:591.4px;width:4px;height:4px;border-radius:50%;background:#0a50bf"></div>
<div style="position:absolute;left:1839px;top:600.2px;width:4px;height:4px;border-radius:50%;background:#0a50bf"></div>
<div style="position:absolute;left:1839px;top:608.9px;width:4px;height:4px;border-radius:50%;background:#0a50bf"></div>
<div style="position:absolute;left:391px;top:568px;width:1477px;height:1px;background:#42465d;"></div>
<div class="t" style="left:424.0px;top:659.1px;font-size:21px;line-height:21px;color:#b9b7ce;-webkit-text-stroke:0.35px #b9b7ce;">4</div>
<div class="t" style="left:495.3px;top:658.9px;font-size:22px;line-height:22px;color:#b9b7ce;font-weight:bold;letter-spacing:-0.03px;">POS-251212-0002</div>
<div class="t" style="left:726.3px;top:659.1px;font-size:21px;line-height:21px;color:#b9b7ce;letter-spacing:-1.66px;-webkit-text-stroke:0.35px #b9b7ce;">POS</div>
<div class="t" style="left:917.0px;top:659.1px;font-size:21px;line-height:21px;color:#b9b7ce;letter-spacing:0.09px;-webkit-text-stroke:0.35px #b9b7ce;">Bayu Bimantoro</div>
<div class="t" style="left:1126.2px;top:659.1px;font-size:21px;line-height:21px;color:#b9b7ce;letter-spacing:0.04px;-webkit-text-stroke:0.35px #b9b7ce;">Rp 25.000</div>
<div style="position:absolute;left:1279.4px;top:654.5px;width:76px;height:33px;background:#3b3f54;border-radius:5px;"></div>
<div class="t" style="left:1293.8px;top:661.7px;font-size:18px;line-height:18px;color:#808396;letter-spacing:0.03px;-webkit-text-stroke:0.4px #808396;transform:scaleX(0.93);transform-origin:0 0;">OPEN</div>
<div class="t" style="left:1411.8px;top:659.1px;font-size:21px;line-height:21px;color:#b9b7ce;letter-spacing:0.22px;-webkit-text-stroke:0.35px #b9b7ce;">Toko Magelang</div>
<div class="t" style="left:1601.5px;top:659.1px;font-size:21px;line-height:21px;color:#b9b7ce;-webkit-text-stroke:0.35px #b9b7ce;">12-12-2025 21:15</div>
<div style="position:absolute;left:1839px;top:659.4px;width:4px;height:4px;border-radius:50%;background:#0a50bf"></div>
<div style="position:absolute;left:1839px;top:668.2px;width:4px;height:4px;border-radius:50%;background:#0a50bf"></div>
<div style="position:absolute;left:1839px;top:676.9px;width:4px;height:4px;border-radius:50%;background:#0a50bf"></div>
<div style="position:absolute;left:391px;top:636px;width:1477px;height:1px;background:#42465d;"></div>
<div class="t" style="left:424.0px;top:728.1px;font-size:21px;line-height:21px;color:#b9b7ce;-webkit-text-stroke:0.35px #b9b7ce;">5</div>
<div class="t" style="left:495.3px;top:727.9px;font-size:22px;line-height:22px;color:#b9b7ce;font-weight:bold;letter-spacing:-0.03px;">POS-251212-0003</div>
<div class="t" style="left:726.3px;top:728.1px;font-size:21px;line-height:21px;color:#b9b7ce;letter-spacing:-1.66px;-webkit-text-stroke:0.35px #b9b7ce;">POS</div>
<div class="t" style="left:917.0px;top:728.1px;font-size:21px;line-height:21px;color:#b9b7ce;letter-spacing:0.17px;-webkit-text-stroke:0.35px #b9b7ce;">Haidar</div>
<div class="t" style="left:1126.5px;top:728.1px;font-size:21px;line-height:21px;color:#b9b7ce;-webkit-text-stroke:0.35px #b9b7ce;">Rp 75.000</div>
<div style="position:absolute;left:1268px;top:723px;width:99px;height:33px;background:#2e4b4f;border-radius:5px;"></div>
<div class="t" style="left:1282.5px;top:730.7px;font-size:18px;line-height:18px;color:#28c76f;letter-spacing:0.36px;-webkit-text-stroke:0.5px #28c76f;transform:scaleX(0.93);transform-origin:0 0;">CLOSED</div>
<div class="t" style="left:1411.8px;top:728.1px;font-size:21px;line-height:21px;color:#b9b7ce;letter-spacing:0.22px;-webkit-text-stroke:0.35px #b9b7ce;">Toko Magelang</div>
<div class="t" style="left:1601.5px;top:728.1px;font-size:21px;line-height:21px;color:#b9b7ce;-webkit-text-stroke:0.35px #b9b7ce;">12-12-2025 21:30</div>
<div style="position:absolute;left:1839px;top:728.4px;width:4px;height:4px;border-radius:50%;background:#0a50bf"></div>
<div style="position:absolute;left:1839px;top:737.2px;width:4px;height:4px;border-radius:50%;background:#0a50bf"></div>
<div style="position:absolute;left:1839px;top:745.9px;width:4px;height:4px;border-radius:50%;background:#0a50bf"></div>
<div style="position:absolute;left:391px;top:705px;width:1477px;height:1px;background:#42465d;"></div>
<div class="t" style="left:424.0px;top:797.1px;font-size:21px;line-height:21px;color:#b9b7ce;-webkit-text-stroke:0.35px #b9b7ce;">6</div>
<div class="t" style="left:495.3px;top:796.9px;font-size:22px;line-height:22px;color:#b9b7ce;font-weight:bold;letter-spacing:0.19px;">SO-260115-0003</div>
<div class="t" style="left:726.3px;top:797.1px;font-size:21px;line-height:21px;color:#b9b7ce;letter-spacing:-0.95px;-webkit-text-stroke:0.35px #b9b7ce;">SALES_ORDER</div>
<div class="t" style="left:917.0px;top:797.1px;font-size:21px;line-height:21px;color:#b9b7ce;letter-spacing:0.17px;-webkit-text-stroke:0.35px #b9b7ce;">Haidar</div>
<div class="t" style="left:1126.5px;top:797.1px;font-size:21px;line-height:21px;color:#b9b7ce;-webkit-text-stroke:0.35px #b9b7ce;">Rp 30.000</div>
<div style="position:absolute;left:1279.4px;top:792.5px;width:76px;height:33px;background:#3b3f54;border-radius:5px;"></div>
<div class="t" style="left:1293.8px;top:799.7px;font-size:18px;line-height:18px;color:#808396;letter-spacing:0.03px;-webkit-text-stroke:0.4px #808396;transform:scaleX(0.93);transform-origin:0 0;">OPEN</div>
<div class="t" style="left:1411.8px;top:797.1px;font-size:21px;line-height:21px;color:#b9b7ce;letter-spacing:0.22px;-webkit-text-stroke:0.35px #b9b7ce;">Toko Magelang</div>
<div class="t" style="left:1601.5px;top:797.1px;font-size:21px;line-height:21px;color:#b9b7ce;-webkit-text-stroke:0.35px #b9b7ce;">15-01-2026 23:28</div>
<div style="position:absolute;left:1839px;top:797.4px;width:4px;height:4px;border-radius:50%;background:#0a50bf"></div>
<div style="position:absolute;left:1839px;top:806.2px;width:4px;height:4px;border-radius:50%;background:#0a50bf"></div>
<div style="position:absolute;left:1839px;top:814.9px;width:4px;height:4px;border-radius:50%;background:#0a50bf"></div>
<div style="position:absolute;left:391px;top:774px;width:1477px;height:1px;background:#42465d;"></div>
<div class="t" style="left:424.0px;top:866.1px;font-size:21px;line-height:21px;color:#b9b7ce;-webkit-text-stroke:0.35px #b9b7ce;">7</div>
<div class="t" style="left:495.3px;top:865.9px;font-size:22px;line-height:22px;color:#b9b7ce;font-weight:bold;letter-spacing:-0.03px;">POS-251212-0004</div>
<div class="t" style="left:726.3px;top:866.1px;font-size:21px;line-height:21px;color:#b9b7ce;letter-spacing:-1.66px;-webkit-text-stroke:0.35px #b9b7ce;">POS</div>
<div class="t" style="left:917.0px;top:866.1px;font-size:21px;line-height:21px;color:#b9b7ce;letter-spacing:0.18px;-webkit-text-stroke:0.35px #b9b7ce;">Haidaar</div>
<div class="t" style="left:1126.5px;top:866.1px;font-size:21px;line-height:21px;color:#b9b7ce;-webkit-text-stroke:0.35px #b9b7ce;">Rp 60.000</div>
<div style="position:absolute;left:1268px;top:861px;width:99px;height:33px;background:#2e4b4f;border-radius:5px;"></div>
<div class="t" style="left:1282.5px;top:868.7px;font-size:18px;line-height:18px;color:#28c76f;letter-spacing:0.36px;-webkit-text-stroke:0.5px #28c76f;transform:scaleX(0.93);transform-origin:0 0;">CLOSED</div>
<div class="t" style="left:1411.8px;top:866.1px;font-size:21px;line-height:21px;color:#b9b7ce;letter-spacing:0.22px;-webkit-text-stroke:0.35px #b9b7ce;">Toko Magelang</div>
<div class="t" style="left:1601.5px;top:866.1px;font-size:21px;line-height:21px;color:#b9b7ce;-webkit-text-stroke:0.35px #b9b7ce;">12-12-2025 22:12</div>
<div style="position:absolute;left:1839px;top:866.4px;width:4px;height:4px;border-radius:50%;background:#0a50bf"></div>
<div style="position:absolute;left:1839px;top:875.2px;width:4px;height:4px;border-radius:50%;background:#0a50bf"></div>
<div style="position:absolute;left:1839px;top:883.9px;width:4px;height:4px;border-radius:50%;background:#0a50bf"></div>
<div style="position:absolute;left:391px;top:843px;width:1477px;height:1px;background:#42465d;"></div>
<div style="position:absolute;left:0px;top:0px;width:1900px;height:1px;background:#4a4a48;"></div>
</body></html>
